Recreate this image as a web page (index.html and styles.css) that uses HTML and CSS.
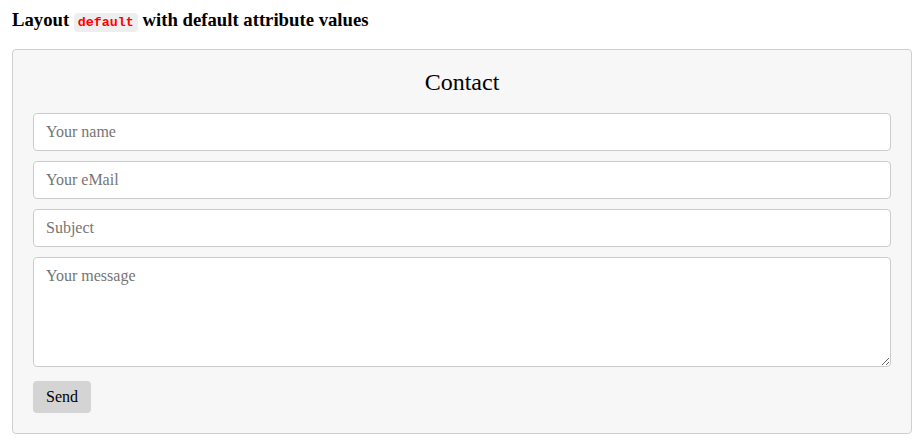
FILE: index.html
```html
<!DOCTYPE html>
<html>
<head>
<meta charset="utf-8">
<link rel="stylesheet" href="styles.css">
</head>
<body>
<h3 class="title">Layout <code class="tag">default</code> with default attribute values</h3>
<form class="contact">
  <h2 class="contact-title">Contact</h2>
  <input class="field" type="text" placeholder="Your name">
  <input class="field" type="text" placeholder="Your eMail">
  <input class="field" type="text" placeholder="Subject">
  <textarea class="field area" placeholder="Your message"></textarea>
  <div class="actions"><button class="send" type="button">Send</button></div>
</form>
</body>
</html>
```
FILE: styles.css
```css
html, body { margin: 0; padding: 0; background: #fff; }
body {
  font-family: "Liberation Serif", "Times New Roman", serif;
  padding: 9px 10px 0 12px;
  color: #000;
}
.title {
  margin: 0 0 15px 0;
  font-size: 18.72px;
  font-weight: bold;
  line-height: 22px;
}
.tag {
  font-family: "Liberation Mono", "DejaVu Sans Mono", monospace;
  font-size: 13.33px;
  font-weight: bold;
  color: #ff0000;
  background: #eeeeee;
  border-radius: 4px;
  padding: 2px 4px;
}
.contact {
  display: flex;
  flex-direction: column;
  gap: 10px;
  background: #f7f7f7;
  border: 1px solid #cfcfcf;
  border-radius: 4px;
  padding: 16px 20px 20px 20px;
}
.contact-title {
  margin: 0 0 5px 0;
  text-align: center;
  font-weight: normal;
  font-size: 24px;
  line-height: 32px;
}
.field {
  box-sizing: border-box;
  height: 38px;
  width: 100%;
  margin: 0;
  border: 1px solid #cccccc;
  border-radius: 4px;
  background: #fff;
  padding: 0 12px;
  font-family: "Liberation Serif", "Times New Roman", serif;
  font-size: 16px;
  color: #333;
}
.field::placeholder { color: #757575; }
.area {
  height: 110px;
  padding: 9px 12px;
  resize: vertical;
}
.actions { display: flex; margin-top: 4px; }
.send {
  height: 32px;
  width: 58px;
  border: none;
  border-radius: 4px;
  background: #d4d4d4;
  font-family: "Liberation Serif", "Times New Roman", serif;
  font-size: 16px;
  color: #000;
  padding: 0;
}
```
